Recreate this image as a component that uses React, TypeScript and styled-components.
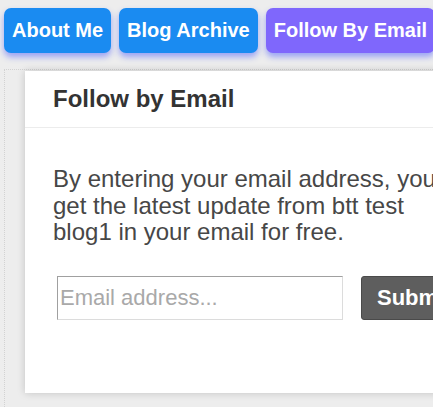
import styled, { createGlobalStyle } from "styled-components";

const GlobalStyle = createGlobalStyle`
  html, body {
    margin: 0;
    padding: 0;
    background: #ededed;
    overflow: hidden;
    font-family: "Liberation Sans", Arial, sans-serif;
  }
`;

const Page = styled.div`
  width: 433px;
  height: 407px;
  overflow: hidden;
`;

const TabBar = styled.nav`
  display: flex;
  gap: 8px;
  padding: 8px 0 0 4px;
`;

const Tab = styled.a<{ $active?: boolean }>`
  display: flex;
  align-items: center;
  height: 45px;
  padding: 0 8px;
  border-radius: 7px;
  background: ${(p) => (p.$active ? "#7f67fc" : "#1a8bf1")};
  color: #fff;
  font-size: 20px;
  font-weight: 700;
  white-space: nowrap;
  text-decoration: none;
  box-shadow: 0 4px 6px rgba(50, 70, 255, 0.45);
`;

const Section = styled.section`
  margin: 16px 0 0 4px;
  padding: 1px 0 0 20px;
  border-top: 1px dotted #d2d2d2;
  border-left: 1px dotted #d2d2d2;
  height: 400px;
`;

const Panel = styled.div`
  width: 470px;
  background: #fff;
  box-shadow: 0 0 8px rgba(0, 0, 0, 0.18);
`;

const Header = styled.div`
  height: 56px;
  display: flex;
  align-items: center;
  padding-left: 28px;
  border-bottom: 1px solid #ececec;
`;

const Title = styled.h2`
  margin: 0;
  font-size: 24px;
  font-weight: 700;
  color: #333;
`;

const Body = styled.div`
  padding: 38px 0 73px 28px;
`;

const Text = styled.p`
  margin: 0;
  width: 400px;
  font-size: 24px;
  line-height: 26.5px;
  color: #474747;
`;

const Form = styled.form`
  display: flex;
  margin: 30px 0 0 4px;
`;

const Input = styled.input`
  box-sizing: border-box;
  width: 286px;
  height: 44px;
  padding: 0 2px;
  border: 1px solid #dcdcdc;
  border-top-color: #a0a0a0;
  border-left-color: #a0a0a0;
  font-family: "Liberation Sans", Arial, sans-serif;
  font-size: 22px;
  color: #333;
  &::placeholder {
    color: #a9a9a9;
  }
`;

const Submit = styled.button`
  box-sizing: border-box;
  height: 44px;
  margin-left: 18px;
  padding: 0 15px;
  border: 1px solid #4a4a4a;
  border-radius: 3px;
  background: #5e5e5e;
  color: #fff;
  font-family: "Liberation Sans", Arial, sans-serif;
  font-size: 22px;
  font-weight: 700;
`;

const tabs = ["About Me", "Blog Archive", "Follow By Email"];

export default function App() {
  return (
    <Page>
      <GlobalStyle />
      <TabBar>
        {tabs.map((t) => (
          <Tab key={t} $active={t === "Follow By Email"}>
            {t}
          </Tab>
        ))}
      </TabBar>
      <Section>
        <Panel>
          <Header>
            <Title>Follow by Email</Title>
          </Header>
          <Body>
            <Text>
              By entering your email address, you get the latest update from
              btt test blog1 in your email for free.
            </Text>
            <Form onSubmit={(e) => e.preventDefault()}>
              <Input placeholder="Email address..." />
              <Submit type="submit">Submit</Submit>
            </Form>
          </Body>
        </Panel>
      </Section>
    </Page>
  );
}
